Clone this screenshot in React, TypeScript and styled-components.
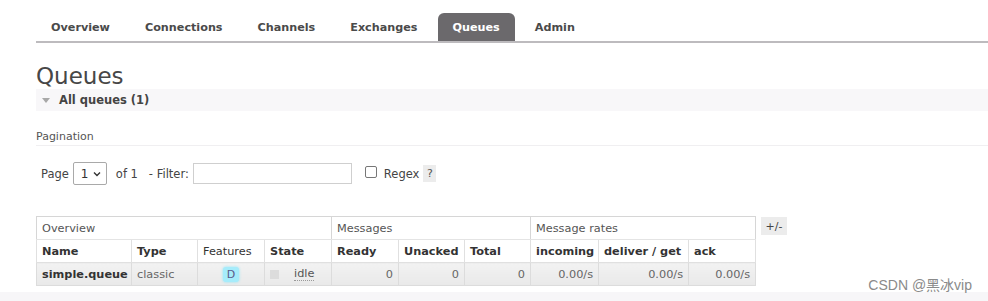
import React from 'react';
import styled, { createGlobalStyle } from 'styled-components';

const GlobalStyle = createGlobalStyle`
  html, body {
    margin: 0;
    padding: 0;
    background: #fff;
  }
  body {
    font-family: "DejaVu Sans", Verdana, sans-serif;
    color: #484848;
    width: 988px;
    height: 301px;
    overflow: hidden;
  }
`;

const Page = styled.div`
  position: relative;
  height: 301px;
  padding-left: 36px;
  box-sizing: border-box;
`;

const TabBar = styled.ul`
  display: flex;
  list-style: none;
  margin: 0;
  padding: 13px 0 0 0;
  border-bottom: 2px solid #bdbbbe;
  height: 28px;
`;

const Tab = styled.li<{ $active?: boolean }>`
  padding: 0 15px;
  margin-right: 5px;
  height: 28px;
  line-height: 30px;
  font-size: 11.2px;
  font-weight: bold;
  color: ${(p) => (p.$active ? '#fff' : '#4a4a4a')};
  background: ${(p) => (p.$active ? '#6b696c' : 'transparent')};
  border-radius: 6px 6px 0 0;
`;

const Title = styled.h1`
  margin: 20px 0 0 0;
  font-size: 23px;
  font-weight: normal;
  color: #474747;
  line-height: 26px;
`;

const SectionHeader = styled.div`
  display: flex;
  align-items: center;
  gap: 9px;
  height: 22px;
  padding-left: 6px;
  background: #f8f7f9;
  font-size: 11.5px;
  font-weight: bold;
  color: #444;
`;

const Arrow = styled.span`
  width: 0;
  height: 0;
  border-left: 4px solid transparent;
  border-right: 4px solid transparent;
  border-top: 5px solid #a8a8a8;
`;

const SubLabel = styled.div`
  margin-top: 19px;
  padding-bottom: 2px;
  font-size: 11px;
  color: #555;
  border-bottom: 1px solid #f0eff1;
`;

const FilterRow = styled.div`
  display: flex;
  align-items: center;
  margin-top: 16px;
  padding-left: 5px;
  font-size: 11.5px;
  color: #444;
  height: 23px;
`;

const Select = styled.div`
  display: flex;
  align-items: center;
  justify-content: space-between;
  box-sizing: border-box;
  width: 34px;
  height: 23px;
  margin: 0 9px 0 4px;
  padding: 0 5px 0 7px;
  border: 1px solid #a9a9a9;
  border-radius: 2px;
  font-size: 12px;
  color: #333;
`;

const TextInput = styled.div`
  box-sizing: border-box;
  width: 159px;
  height: 21px;
  margin-left: 4px;
  border: 1px solid #cfcfcf;
`;

const Checkbox = styled.span`
  box-sizing: border-box;
  width: 12px;
  height: 12px;
  margin: -4px 0 0 13px;
  border: 1px solid #777;
  border-radius: 2px;
`;

const CheckLabel = styled.span`
  margin-left: 7px;
`;

const HelpTag = styled.span`
  display: inline-flex;
  align-items: center;
  justify-content: center;
  width: 13px;
  height: 17px;
  margin-left: 4px;
  background: #ececec;
  color: #555;
  font-size: 11px;
`;

const TableWrap = styled.div`
  display: flex;
  align-items: flex-start;
  gap: 5px;
  margin-top: 31px;
`;

const Table = styled.table`
  width: 719px;
  border-collapse: collapse;
  table-layout: fixed;
  font-size: 11.3px;
  border: 1px solid #d6d6d6;
`;

const GroupCell = styled.th`
  height: 22px;
  padding: 0 5px;
  text-align: left;
  font-weight: normal;
  color: #555;
  background: #fff;
  border-left: 1px solid #d6d6d6;
  border-bottom: 1px solid #e4e4e4;
`;

const HeadCell = styled.th<{ $plain?: boolean }>`
  height: 22px;
  padding: 0 5px;
  text-align: left;
  font-weight: ${(p) => (p.$plain ? 'normal' : 'bold')};
  color: #333;
  background: #fff;
  border: 1px solid #e0e0e0;
  white-space: nowrap;
  overflow: hidden;
`;

const Cell = styled.td<{ $align?: string; $bold?: boolean; $muted?: boolean }>`
  height: 22px;
  padding: 0 5px;
  text-align: ${(p) => p.$align || 'left'};
  font-weight: ${(p) => (p.$bold ? 'bold' : 'normal')};
  color: ${(p) => (p.$muted ? '#666' : '#333')};
  background: linear-gradient(#f2f2f2, #e9e9e9);
  border: 1px solid #dcdcdc;
  white-space: nowrap;
  overflow: hidden;
`;

const Badge = styled.span`
  display: inline-block;
  padding: 1px 4px;
  border-radius: 3px;
  background: #a6ecfb;
  box-shadow: 0 0 3px #8fe4f7;
  color: #5a5a8a;
  font-size: 11px;
`;

const StateWrap = styled.span`
  display: flex;
  align-items: center;
  gap: 15px;
`;

const StateDot = styled.span`
  width: 9px;
  height: 9px;
  background: #dcdcdc;
`;

const Idle = styled.span`
  color: #555;
  border-bottom: 1px dotted #999;
  line-height: 12px;
`;

const ToggleTag = styled.span`
  display: inline-flex;
  align-items: center;
  justify-content: center;
  width: 26px;
  height: 18px;
  margin-top: 1px;
  background: #ececec;
  color: #444;
  font-size: 11px;
`;

const Footer = styled.div`
  position: absolute;
  left: 0;
  right: 0;
  bottom: 0;
  height: 9px;
  background: #f7f6f8;
`;

const Watermark = styled.span`
  position: absolute;
  right: 16px;
  top: 274px;
  font-family: "Liberation Sans", "Noto Sans CJK SC", sans-serif;
  font-size: 14px;
  color: #8a8a8a;
`;

const tabs = ['Overview', 'Connections', 'Channels', 'Exchanges', 'Queues', 'Admin'];
const widths = [95, 66, 67, 67, 67, 66, 66, 68, 90, 67];
const headers = ['Name', 'Type', 'Features', 'State', 'Ready', 'Unacked', 'Total', 'incoming', 'deliver / get', 'ack'];

const App = () => {
  return (
    <>
      <GlobalStyle />
      <Page>
        <TabBar>
          {tabs.map((t) => (
            <Tab key={t} $active={t === 'Queues'}>
              {t}
            </Tab>
          ))}
        </TabBar>

        <Title>Queues</Title>
        <SectionHeader>
          <Arrow />
          All queues (1)
        </SectionHeader>

        <SubLabel>Pagination</SubLabel>
        <FilterRow>
          Page
          <Select>
            1
            <svg width="8" height="6" viewBox="0 0 8 6">
              <path d="M1 1.5 L4 4.5 L7 1.5" fill="none" stroke="#333" strokeWidth="1.4" />
            </svg>
          </Select>
          of 1&nbsp;&nbsp; - Filter:
          <TextInput />
          <Checkbox />
          <CheckLabel>Regex</CheckLabel>
          <HelpTag>?</HelpTag>
        </FilterRow>

        <TableWrap>
          <Table>
            <colgroup>
              {widths.map((w, i) => (
                <col key={i} style={{ width: w }} />
              ))}
            </colgroup>
            <thead>
              <tr>
                <GroupCell colSpan={4}>Overview</GroupCell>
                <GroupCell colSpan={3}>Messages</GroupCell>
                <GroupCell colSpan={3}>Message rates</GroupCell>
              </tr>
              <tr>
                {headers.map((h) => (
                  <HeadCell key={h} $plain={h === 'Features'}>
                    {h}
                  </HeadCell>
                ))}
              </tr>
            </thead>
            <tbody>
              <tr>
                <Cell $bold>simple.queue</Cell>
                <Cell $muted>classic</Cell>
                <Cell $align="center">
                  <Badge>D</Badge>
                </Cell>
                <Cell>
                  <StateWrap>
                    <StateDot />
                    <Idle>idle</Idle>
                  </StateWrap>
                </Cell>
                <Cell $align="right" $muted>0</Cell>
                <Cell $align="right" $muted>0</Cell>
                <Cell $align="right" $muted>0</Cell>
                <Cell $align="right" $muted>0.00/s</Cell>
                <Cell $align="right" $muted>0.00/s</Cell>
                <Cell $align="right" $muted>0.00/s</Cell>
              </tr>
            </tbody>
          </Table>
          <ToggleTag>+/-</ToggleTag>
        </TableWrap>

        <Footer />
        <Watermark>CSDN @黑冰vip</Watermark>
      </Page>
    </>
  );
};

export default App;
